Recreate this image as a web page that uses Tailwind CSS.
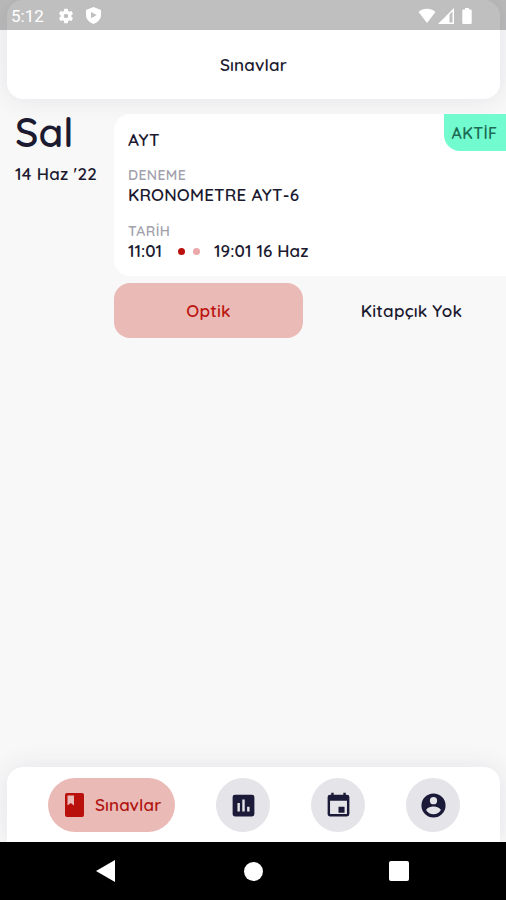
<!DOCTYPE html>
<html lang="tr">

<head>
  <meta charset="utf-8" />
  <meta name="viewport" content="width=device-width, initial-scale=1" />
  <title>Sınavlar</title>
  <script src="https://cdn.jsdelivr.net/npm/@tailwindcss/browser@4"></script>
</head>

<body class="bg-[#f8f8f8]">
  <div class="relative flex h-[900px] w-[506px] flex-col overflow-hidden bg-[#f8f8f8] font-[Quicksand,Lato,sans-serif] text-[17px] leading-5 font-semibold text-[#1b1a30]">

    <!-- Status bar, translucent over the header -->
    <div class="absolute inset-x-0 top-0 z-10 flex h-[30px] items-center bg-black/25 pt-px pl-[11px] text-white">
      <span class="w-[46px] font-[Roboto,sans-serif] text-[17px] font-normal">5:12</span>
      <svg class="size-[18px]" viewBox="0 0 24 24" fill="currentColor">
        <path d="M19.14 12.94c.04-.3.06-.61.06-.94 0-.32-.02-.64-.07-.94l2.03-1.58a.49.49 0 0 0 .12-.61l-1.92-3.32a.49.49 0 0 0-.59-.22l-2.39.96a7.03 7.03 0 0 0-1.62-.94l-.36-2.54a.48.48 0 0 0-.48-.41h-3.84a.48.48 0 0 0-.47.41l-.36 2.54c-.59.24-1.13.57-1.62.94l-2.39-.96a.48.48 0 0 0-.59.22L2.74 8.87a.48.48 0 0 0 .12.61l2.03 1.58c-.05.3-.09.63-.09.94s.02.64.07.94l-2.03 1.58a.49.49 0 0 0-.12.61l1.92 3.32c.12.22.37.29.59.22l2.39-.96c.5.38 1.03.7 1.62.94l.36 2.54c.05.24.24.41.48.41h3.84c.24 0 .44-.17.47-.41l.36-2.54c.59-.24 1.13-.56 1.62-.94l2.39.96c.22.08.47 0 .59-.22l1.92-3.32a.48.48 0 0 0-.12-.61zM12 15a3 3 0 1 1 0-6 3 3 0 0 1 0 6z" />
      </svg>
      <svg class="ml-[11px] h-[17px] w-[15px]" viewBox="0 0 15 17" fill="currentColor" fill-rule="evenodd">
        <path d="M7.5 0 15 2.9V8c0 4-3.100 7.600-7.500 9C3.100 15.600 0 12 0 8V2.900zM5 5v6.200L10.700 8.100z" />
      </svg>
      <svg class="ml-auto h-[15px] w-[18px]" viewBox="0 0 18 16" fill="currentColor">
        <path d="M9 16 0 4.300C5 -.4 13-.4 18 4.300z" />
      </svg>
      <svg class="ml-[2px] size-[16px]" viewBox="0 0 16 16" fill="currentColor" fill-rule="evenodd">
        <path d="M16 0v16H0zM11.500 6.600v7.900h3V3.600z" />
      </svg>
      <svg class="mr-[34px] ml-[8px] h-[16px] w-[10px]" viewBox="0 0 10 17" fill="currentColor">
        <path d="M3 0h4v1.700h2c.6 0 1 .4 1 1V16c0 .6-.4 1-1 1H1c-.6 0-1-.4-1-1V2.700c0-.6.4-1 1-1h2z" />
      </svg>
    </div>

    <!-- Header -->
    <header class="mr-[6px] ml-[7px] flex h-[99px] shrink-0 items-end justify-center rounded-2xl bg-white pb-6 shadow-[0_0_26px_rgba(50,50,95,0.10)]">
      <h1 class="tracking-[0.2px]">Sınavlar</h1>
    </header>

    <!-- Exams -->
    <main class="flex flex-1 pt-[15px]">
      <div class="w-[114px] shrink-0 pl-[15px]">
        <p class="h-9 text-[40px] leading-9 font-semibold">Sal</p>
        <p class="mt-[14px] tracking-[0.3px] whitespace-nowrap">14 Haz '22</p>
      </div>
      <div class="flex-1">
        <div class="relative z-[1] h-[162px] rounded-l-2xl bg-white pt-[16px] pl-[14px]">
          <p class="tracking-[0.3px]">AYT</p>
          <p class="mt-[16px] text-[14px] leading-[18px] tracking-[0.4px] text-[#a1a1ac]">DENEME</p>
          <p class="mt-[1px] tracking-[0.2px]">KRONOMETRE AYT-6</p>
          <p class="mt-[17px] text-[14px] leading-[18px] tracking-[0.4px] text-[#a1a1ac]">TARİH</p>
          <div class="mt-[1px] flex items-center">
            <span class="w-[50px]">11:01</span>
            <span class="size-[7px] rounded-full bg-[#b9100c]"></span>
            <span class="ml-2 size-[7px] rounded-full bg-[#eaa9a8]"></span>
            <span class="ml-[14px] tracking-[0.1px]">19:01 16 Haz</span>
          </div>
          <span class="absolute top-0 right-0 flex h-[37px] w-[62px] items-center justify-center rounded-bl-2xl bg-[#72fbcf] pr-px text-[16px] tracking-[0.4px] text-[#1c6c55]">AKTİF</span>
        </div>
        <div class="mt-[7px] flex">
          <button type="button" class="h-[55px] w-[189px] rounded-2xl bg-[#eabab7] tracking-[0.2px] text-[#bb1510]">Optik</button>
          <button type="button" class="h-[55px] flex-1 pl-[14px] tracking-[0.2px]">Kitapçık Yok</button>
        </div>
      </div>
    </main>

    <!-- Tabs -->
    <nav class="mr-[6px] ml-[7px] flex h-[75px] shrink-0 gap-[41px] rounded-t-2xl bg-white pt-[11px] pl-[41px] shadow-[0_0_26px_rgba(50,50,95,0.10)]">
      <a class="flex h-[54px] w-[127px] items-center rounded-full bg-[#eabab7] pl-[17px] tracking-[0.1px] text-[#b01512]">
        <svg class="h-[24px] w-[19px]" viewBox="0 0 19 24">
          <rect width="19" height="24" rx="2" fill="#b9100c" />
          <path d="M2.500 2.500H9v10l-3.250-2.500-3.250 2.500z" fill="#eabab7" />
        </svg>
        <span class="ml-[11px]">Sınavlar</span>
      </a>
      <a class="flex size-[54px] items-center justify-center rounded-full bg-[#e4e4e9]">
        <svg class="size-[29px]" viewBox="0 0 24 24" fill="#1b1a38">
          <path d="M19 3H5a2 2 0 0 0-2 2v14c0 1.100.9 2 2 2h14a2 2 0 0 0 2-2V5a2 2 0 0 0-2-2zM9 17H7v-7h2zm4 0h-2V7h2zm4 0h-2v-4h2z" />
        </svg>
      </a>
      <a class="flex size-[54px] items-center justify-center rounded-full bg-[#e4e4e9]">
        <svg class="size-[29px]" viewBox="0 0 24 24" fill="#1b1a38">
          <path d="M19 3h-1V1.500h-2V3H8V1.500H6V3H5a2 2 0 0 0-2 2v14c0 1.100.9 2 2 2h14a2 2 0 0 0 2-2V5a2 2 0 0 0-2-2zm0 16H5V8h14zm-7-6h5v5h-5z" />
        </svg>
      </a>
      <a class="flex size-[54px] items-center justify-center rounded-full bg-[#e4e4e9]">
        <svg class="size-[29px]" viewBox="0 0 24 24" fill="#1b1a38">
          <path d="M12 2a10 10 0 1 0 0 20 10 10 0 0 0 0-20zm0 3a3 3 0 1 1 0 6 3 3 0 0 1 0-6zm0 14.200a7.200 7.200 0 0 1-6-3.220c.03-1.990 4-3.080 6-3.080s5.970 1.090 6 3.080a7.200 7.200 0 0 1-6 3.220z" />
        </svg>
      </a>
    </nav>

    <!-- System navigation -->
    <div class="z-[1] flex h-[58px] shrink-0 items-center bg-black pl-[96px] text-white">
      <svg class="h-[22px] w-[19px]" viewBox="0 0 19 22" fill="currentColor">
        <path d="M0 11 19 0v22z" />
      </svg>
      <span class="ml-[129px] size-[19px] rounded-full bg-white"></span>
      <span class="ml-[126px] size-5 rounded-[2px] bg-white"></span>
    </div>
  </div>
</body>

</html>
